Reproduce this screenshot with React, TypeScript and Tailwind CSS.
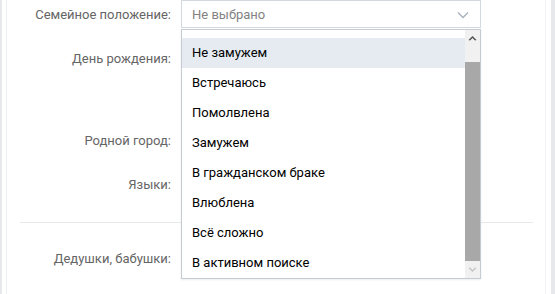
import React from 'react';

const items = [
  'Не замужем',
  'Встречаюсь',
  'Помолвлена',
  'Замужем',
  'В гражданском браке',
  'Влюблена',
  'Всё сложно',
  'В активном поиске',
];

const Label: React.FC<{ text: string }> = ({ text }) => (
  <div className="w-[164px] shrink-0 text-right text-[#656565] leading-[30px]">{text}</div>
);

export default function App() {
  return (
    <div
      className="relative flex h-[294px] w-[555px] overflow-hidden bg-white text-[13px]"
      style={{ fontFamily: 'Roboto, "Noto Sans", sans-serif' }}
    >
      <div className="w-[2px] bg-[#e7e8ec]" />
      <div className="w-[4px]" />
      <div className="w-px bg-[#eeeff2]" />

      <div className="flex flex-1 flex-col">
        <div className="flex h-[30px]">
          <Label text="Семейное положение:" />
          <div className="ml-[10px] flex h-[28px] w-[300px] items-center justify-between border border-[#d3d9de] pl-[10px] pr-[11px] pt-px text-[#828282]">
            <span>Не выбрано</span>
            <svg width="12" height="8" viewBox="0 0 12 8">
              <polyline points="1,1.5 6,6.5 11,1.5" fill="none" stroke="#a8b0ba" strokeWidth="1.3" />
            </svg>
          </div>
        </div>

        <div className="mt-[14px] flex h-[68px]">
          <Label text="День рождения:" />
        </div>

        <div className="mt-[14px] flex h-[30px]">
          <Label text="Родной город:" />
        </div>

        <div className="mt-[14px] flex h-[30px]">
          <Label text="Языки:" />
        </div>

        <div className="ml-[13px] mr-[12px] mt-[22px] h-px bg-[#e7e8ec]" />

        <div className="mt-[21px] flex h-[30px]">
          <Label text="Дедушки, бабушки:" />
        </div>
      </div>

      <div className="w-px bg-[#f3f3f5]" />
      <div className="w-[5px]" />
      <div className="w-[4px] bg-[#e7e8ec]" />

      <div className="absolute left-[181px] top-[29px] flex h-[250px] w-[300px] border border-[#c5ccd3] bg-white shadow-[0_1px_2px_rgba(0,0,0,0.08)]">
        <div className="flex-1 overflow-hidden pt-[8px]">
          {items.map((item, i) => (
            <div
              key={item}
              className={
                'flex h-[30px] items-center pb-px pl-[10px] text-[#000] ' + (i === 0 ? 'bg-[#e5ebf1]' : '')
              }
            >
              {item}
            </div>
          ))}
        </div>
        <div className="flex w-[15px] flex-col bg-[#f1f1f1]">
          <div className="flex h-[16px] items-center justify-center">
            <svg width="9" height="6" viewBox="0 0 9 6">
              <polygon points="0.5,5 4.5,1 8.5,5 7,5.5 4.5,3 2,5.5" fill="#505050" />
            </svg>
          </div>
          <div className="h-[16px]" />
          <div className="h-[199px] bg-[#a8a8a8]" />
          <div className="flex-1" />
          <div className="flex h-[16px] items-center justify-center">
            <svg width="9" height="6" viewBox="0 0 9 6">
              <polygon points="0.5,1 4.5,5 8.5,1 7,0.5 4.5,3 2,0.5" fill="#c4c4c4" />
            </svg>
          </div>
        </div>
      </div>
    </div>
  );
}
